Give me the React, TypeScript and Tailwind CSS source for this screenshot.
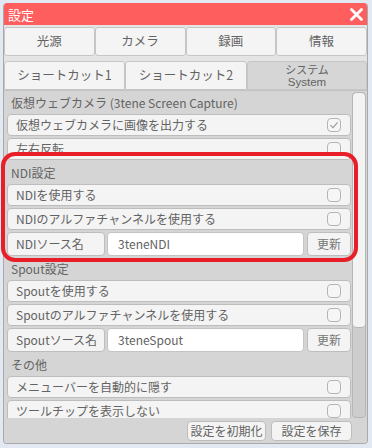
import React from "react";

const font = { fontFamily: '"Noto Sans CJK JP", "Noto Sans", sans-serif' };

function Check({ on }: { on?: boolean }) {
  return (
    <div className="w-[14px] h-[14px] rounded-[4px] border border-[#b4b4b4] bg-[#f6f6f6] flex items-center justify-center">
      {on && (
        <svg width="10" height="10" viewBox="0 0 10 10">
          <path d="M1.5 5.2 L4 7.6 L8.6 2.4" fill="none" stroke="#9a9a9a" strokeWidth="1.1" />
        </svg>
      )}
    </div>
  );
}

function Row({ label, on }: { label: string; on?: boolean }) {
  return (
    <div className="h-[22px] shrink-0 flex items-center justify-between pl-[8px] pr-[9px] bg-[#f4f4f4] border border-[#bdbdbd] rounded-[4px]">
      <span className="leading-none">{label}</span>
      <Check on={on} />
    </div>
  );
}

function SourceRow({ label, value }: { label: string; value: string }) {
  return (
    <div className="h-[24px] shrink-0 flex gap-[2px]">
      <div className="w-[98px] flex items-center pl-[8px] bg-[#f4f4f4] border border-[#bdbdbd] rounded-[4px]">{label}</div>
      <div className="w-[197px] flex items-center pl-[10px] bg-white border border-[#c4c4c4] rounded-[4px]">{value}</div>
      <div className="flex-1 ml-[1px] flex items-center justify-center bg-[#f4f4f4] border border-[#bdbdbd] rounded-[4px] text-[#777777]">更新</div>
    </div>
  );
}

function Header({ title }: { title: string }) {
  return <div className="h-[23px] shrink-0 flex items-center pl-[4px] pt-[1px]">{title}</div>;
}

export default function App() {
  return (
    <div className="relative w-[372px] h-[448px] bg-[#e2e9f2] pt-[3px] pl-[3px] text-[12px] text-[#636363]" style={font}>
      <div className="relative w-[365px] h-[441px] flex flex-col bg-[#e4e4e4] border-x border-b border-[#a9a9a9] rounded-[4px] overflow-hidden">
        {/* title bar */}
        <div className="h-[22px] shrink-0 bg-[#ff5e5e] flex items-center justify-between pl-[4px] pr-[4px]">
          <span className="text-white text-[13px] leading-none">設定</span>
          <svg width="13" height="13" viewBox="0 0 13 13">
            <path d="M1.5 1.5 L11.5 11.5 M11.5 1.5 L1.5 11.5" stroke="white" strokeWidth="2.8" strokeLinecap="round" />
          </svg>
        </div>

        {/* tabs */}
        <div className="grid grid-cols-4 h-[29px] mt-[2px] shrink-0">
          {["光源", "カメラ", "録画", "情報"].map((t) => (
            <div key={t} className="flex items-center justify-center bg-[#f4f4f4] border border-[#c6c6c6] rounded-[3px] text-[12.5px]">
              {t}
            </div>
          ))}
        </div>
        <div className="mt-[5px] grid grid-cols-[121px_122px_1fr] h-[29px] shrink-0">
          <div className="flex items-center justify-center bg-[#f4f4f4] border border-[#c6c6c6] rounded-t-[3px] text-[12.5px]">ショートカット1</div>
          <div className="flex items-center justify-center bg-[#f4f4f4] border border-[#c6c6c6] rounded-t-[3px] text-[12.5px]">ショートカット2</div>
          <div className="flex flex-col items-center justify-center bg-[#d6d6d6] border border-[#c6c6c6] rounded-t-[3px] text-[11px]">
            <span className="leading-[13px]">システム</span>
            <span className="leading-[13px] text-[11.5px]" style={{ fontFamily: '"Liberation Sans", sans-serif' }}>System</span>
          </div>
        </div>

        {/* panel */}
        <div className="flex-1 flex flex-col bg-[#d5d5d5] border-t border-[#c2c2c2]">
          <div className="h-[327px] flex shrink-0">
            <div className="flex-1 overflow-hidden pl-[3px] flex flex-col">
              <Header title="仮想ウェブカメラ (3tene Screen Capture)" />
              <div className="flex flex-col gap-[2px] pb-[1px]">
                <Row label="仮想ウェブカメラに画像を出力する" on />
                <Row label="左右反転" />
              </div>
              <Header title="NDI設定" />
              <div className="flex flex-col gap-[2px] pb-[1px]">
                <Row label="NDIを使用する" />
                <Row label="NDIのアルファチャンネルを使用する" />
                <SourceRow label="NDIソース名" value="3teneNDI" />
              </div>
              <Header title="Spout設定" />
              <div className="flex flex-col gap-[2px] pb-[1px]">
                <Row label="Spoutを使用する" />
                <Row label="Spoutのアルファチャンネルを使用する" />
                <SourceRow label="Spoutソース名" value="3teneSpout" />
              </div>
              <Header title="その他" />
              <div className="flex flex-col gap-[2px]">
                <Row label="メニューバーを自動的に隠す" />
                <Row label="ツールチップを表示しない" />
              </div>
            </div>
            {/* scrollbar */}
            <div className="w-[14px] ml-[1px] mr-[1px] mt-[1px] flex flex-col bg-[#cdcdcd] border border-[#b6b6b6] rounded-[4px] overflow-hidden">
              <div className="h-[235px] bg-[#f3f3f3] border-b border-[#b6b6b6] rounded-[4px]" />
            </div>
          </div>
          <div className="flex-1 flex items-center justify-end gap-[5px] pr-[15px]">
            <div className="h-[20px] w-[79px] flex items-center justify-center bg-[#f4f4f4] border border-[#bdbdbd] rounded-[4px]">設定を初期化</div>
            <div className="h-[20px] w-[81px] flex items-center justify-center bg-[#f4f4f4] border border-[#bdbdbd] rounded-[4px]">設定を保存</div>
          </div>
        </div>
      </div>

      {/* red annotation box */}
      <div className="absolute left-[1px] top-[152px] w-[357px] h-[110px] border-[4px] border-[#e81e28] rounded-[14px] pointer-events-none" />
    </div>
  );
}
